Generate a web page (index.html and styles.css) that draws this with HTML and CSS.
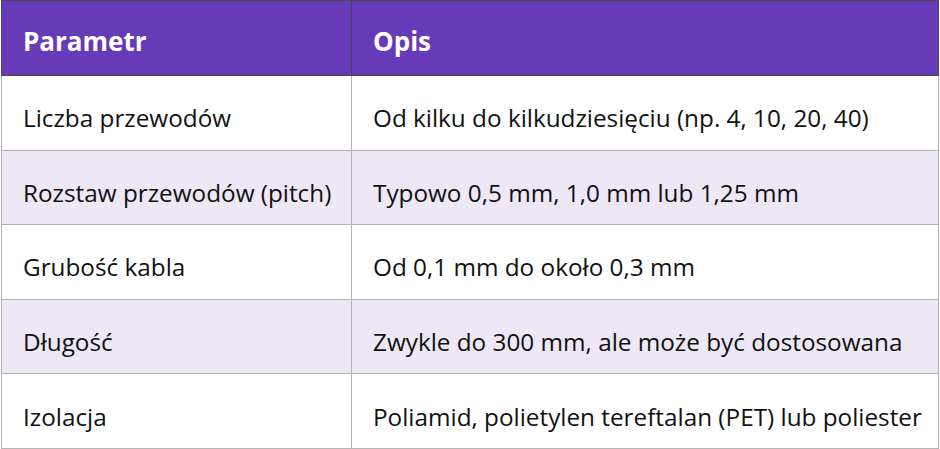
FILE: index.html
```html
<!DOCTYPE html>
<html lang="pl">
<head>
<meta charset="utf-8">
<link rel="stylesheet" href="styles.css">
</head>
<body>
<table class="spec">
  <thead>
    <tr><th class="col-param">Parametr</th><th>Opis</th></tr>
  </thead>
  <tbody>
    <tr><td>Liczba przewodów</td><td>Od kilku do kilkudziesięciu (np. 4, 10, 20, 40)</td></tr>
    <tr class="alt"><td>Rozstaw przewodów (pitch)</td><td>Typowo 0,5 mm, 1,0 mm lub 1,25 mm</td></tr>
    <tr><td>Grubość kabla</td><td>Od 0,1 mm do około 0,3 mm</td></tr>
    <tr class="alt"><td>Długość</td><td>Zwykle do 300 mm, ale może być dostosowana</td></tr>
    <tr><td>Izolacja</td><td>Poliamid, polietylen tereftalan (PET) lub poliester</td></tr>
  </tbody>
</table>
</body>
</html>
```
FILE: styles.css
```css
html, body {
  margin: 0;
  padding: 0;
  background: #ffffff;
}
body {
  padding-left: 1px;
  font-family: "Open Sans", "Noto Sans", sans-serif;
  color: #111111;
}
.spec {
  width: 938px;
  border-collapse: collapse;
  font-size: 24.3px;
}
.spec th,
.spec td {
  text-align: left;
  vertical-align: middle;
  padding: 0 0 0 21px;
  border: 1px solid #b4b4b4;
  height: 74.6px;
  box-sizing: border-box;
  white-space: nowrap;
}
.spec td {
  padding-top: 10px;
}
.spec th {
  background: #673ab7;
  color: #ffffff;
  font-size: 26px;
  font-weight: 700;
  border-color: #4a4a4a;
  height: 75px;
  padding-top: 6px;
}
.spec .col-param {
  width: 350px;
}
.spec .alt td {
  background: #ede7f6;
}
```
